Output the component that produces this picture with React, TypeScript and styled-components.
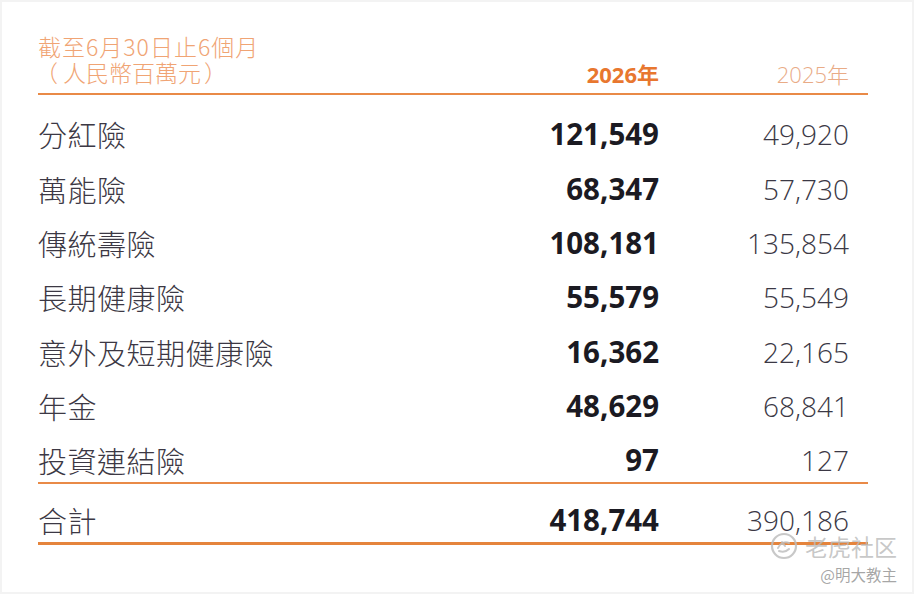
import React from "react";
import styled, { createGlobalStyle } from "styled-components";

const GlobalStyle = createGlobalStyle`
  html, body {
    margin: 0;
    padding: 0;
    background: #ffffff;
  }
`;

type Row = { label: string; current: string; previous: string };

const rows: Row[] = [
  { label: "分紅險", current: "121,549", previous: "49,920" },
  { label: "萬能險", current: "68,347", previous: "57,730" },
  { label: "傳統壽險", current: "108,181", previous: "135,854" },
  { label: "長期健康險", current: "55,579", previous: "55,549" },
  { label: "意外及短期健康險", current: "16,362", previous: "22,165" },
  { label: "年金", current: "48,629", previous: "68,841" },
  { label: "投資連結險", current: "97", previous: "127" },
];

const App: React.FC = () => {
  return (
    <>
      <GlobalStyle />
      <Page>
        <Table>
          <HeaderRow>
            <Caption>
              <Period>截至6月30日止6個月</Period>
              <Unit>
                <Paren>（</Paren>人民幣百萬元<Paren $close>）</Paren>
              </Unit>
            </Caption>
            <YearCell $current>2026年</YearCell>
            <YearCell $last>2025年</YearCell>
          </HeaderRow>
          <Body>
            {rows.map((r) => (
              <DataRow key={r.label}>
                <Label>{r.label}</Label>
                <Amount $current>{r.current}</Amount>
                <Amount $last>{r.previous}</Amount>
              </DataRow>
            ))}
          </Body>
          <TotalRow>
            <Label>合計</Label>
            <Amount $current>418,744</Amount>
            <Amount $last>390,186</Amount>
          </TotalRow>
        </Table>
        <Watermark>
          <Brand>
            <svg width="30" height="30" viewBox="0 0 30 30" fill="none">
              <circle cx="15" cy="15" r="12" stroke="rgba(190,190,190,0.85)" strokeWidth="2.2" />
              <path
                d="M9 17c2-5 7-7 11-5M10 20c3 1 7 1 10-2M13 11l3 4"
                stroke="rgba(190,190,190,0.85)"
                strokeWidth="2"
                strokeLinecap="round"
              />
            </svg>
            <span>老虎社区</span>
          </Brand>
          <Handle>@明大教主</Handle>
        </Watermark>
      </Page>
    </>
  );
};

export default App;

const Page = styled.div`
  position: relative;
  width: 914px;
  height: 594px;
  box-sizing: border-box;
  background: #ffffff;
  box-shadow: inset 0 0 0 2px #f3f3f3;
  padding: 33px 0 0 38px;
  overflow: hidden;
`;

const Table = styled.div`
  width: 830px;
`;

const grid = `
  display: grid;
  grid-template-columns: 1fr 200px 209px;
`;

const HeaderRow = styled.div`
  ${grid}
  align-items: end;
  padding-bottom: 8px;
  border-bottom: 2px solid #e98a47;
`;

const Caption = styled.div`
  display: flex;
  flex-direction: column;
  font-family: "Noto Sans CJK TC", "Noto Sans", sans-serif;
  font-weight: 300;
  font-size: 23px;
  line-height: 26px;
  color: #f0a474;
`;

const Period = styled.span`
  letter-spacing: 1px;
`;

const Unit = styled.span`
  margin-left: -3px;
  white-space: nowrap;
`;

const Paren = styled.span<{ $close?: boolean }>`
  display: inline-block;
  margin: ${(p) => (p.$close ? "0 0 0 3px" : "0 5px 0 0")};
`;

const YearCell = styled.div<{ $current?: boolean; $last?: boolean }>`
  text-align: right;
  font-family: "Open Sans", "Noto Sans CJK TC", sans-serif;
  font-size: 22px;
  line-height: 26px;
  font-weight: ${(p) => (p.$current ? 700 : 300)};
  color: ${(p) => (p.$current ? "#e8772f" : "#e9ab86")};
  padding-right: ${(p) => (p.$last ? "19px" : "0")};
  margin-bottom: -2px;
`;

const Body = styled.div`
  padding-top: 7px;
  border-bottom: 2px solid #e98a47;
`;

const DataRow = styled.div`
  ${grid}
  align-items: end;
  height: 54.33px;
  box-sizing: border-box;
  padding-bottom: 6px;
`;

const TotalRow = styled(DataRow)`
  height: 61px;
  border-bottom: 3px solid #e5843c;
`;

const Label = styled.div`
  font-family: "Noto Sans CJK TC", "Noto Sans", sans-serif;
  font-weight: 300;
  font-size: 29px;
  line-height: 32px;
  color: #3c3844;
  white-space: nowrap;
  letter-spacing: 0.5px;
`;

const Amount = styled.div<{ $current?: boolean; $last?: boolean }>`
  text-align: right;
  font-family: "Open Sans", "Liberation Sans", sans-serif;
  font-size: ${(p) => (p.$current ? "29.5px" : "28px")};
  line-height: 32px;
  font-weight: ${(p) => (p.$current ? 700 : 300)};
  color: ${(p) => (p.$current ? "#1b1a22" : "#3b3845")};
  padding-right: ${(p) => (p.$last ? "19px" : "0")};
`;

const Watermark = styled.div`
  position: absolute;
  right: 17px;
  bottom: 11px;
  display: flex;
  flex-direction: column;
  align-items: flex-end;
  gap: 4px;
  pointer-events: none;
`;

const Brand = styled.div`
  display: flex;
  align-items: center;
  gap: 6px;
  font-family: "Noto Sans CJK SC", sans-serif;
  font-size: 23px;
  line-height: 28px;
  color: rgba(185, 185, 185, 0.8);
`;

const Handle = styled.div`
  font-family: "Noto Sans CJK SC", sans-serif;
  font-size: 15.5px;
  line-height: 18px;
  color: rgba(150, 150, 150, 0.85);
`;
